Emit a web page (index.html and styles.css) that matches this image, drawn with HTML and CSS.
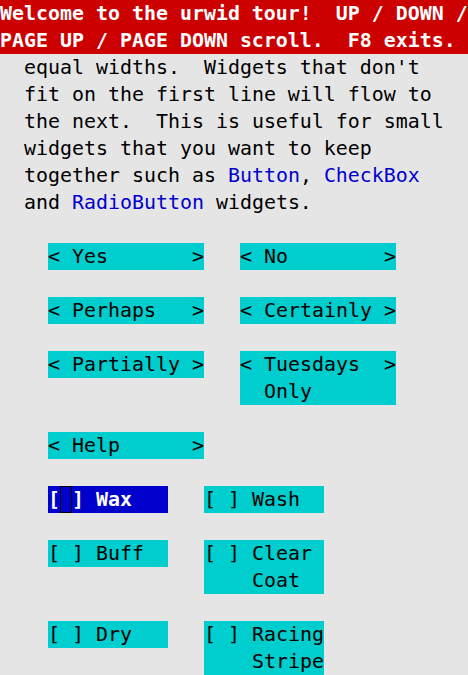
FILE: index.html
```html
<!DOCTYPE html>
<html>
<head>
<meta charset="utf-8">
<link rel="stylesheet" href="styles.css">
</head>
<body>
<div class="screen">
  <header class="header">Welcome to the urwid tour!  UP / DOWN /
PAGE UP / PAGE DOWN scroll.  F8 exits.</header>
  <main class="body">
    <p class="text">equal widths.  Widgets that don't
fit on the first line will flow to
the next.  This is useful for small
widgets that you want to keep
together such as <span class="hl">Button</span>, <span class="hl">CheckBox</span>
and <span class="hl">RadioButton</span> widgets.</p>
    <div class="flow">
      <div class="btn">&lt; Yes       &gt;</div>
      <div class="btn">&lt; No        &gt;</div>
    </div>
    <div class="flow">
      <div class="btn">&lt; Perhaps   &gt;</div>
      <div class="btn">&lt; Certainly &gt;</div>
    </div>
    <div class="flow">
      <div class="btn">&lt; Partially &gt;</div>
      <div class="btn">&lt; Tuesdays  &gt;
  Only</div>
    </div>
    <div class="flow">
      <div class="btn">&lt; Help      &gt;</div>
    </div>
    <div class="flow">
      <div class="chk focus">[<span class="cursor"> </span>] Wax</div>
      <div class="chk">[ ] Wash</div>
    </div>
    <div class="flow">
      <div class="chk">[ ] Buff</div>
      <div class="chk">[ ] Clear
    Coat</div>
    </div>
    <div class="flow">
      <div class="chk">[ ] Dry</div>
      <div class="chk">[ ] Racing
    Stripe</div>
    </div>
  </main>
</div>
</body>
</html>
```
FILE: styles.css
```css
html, body {
  margin: 0;
  padding: 0;
  background: #e5e5e5;
}
body {
  width: 468px;
  height: 675px;
  overflow: hidden;
}
.screen {
  font-family: "DejaVu Sans Mono", monospace;
  font-size: 19.93px;
  line-height: 27px;
  color: #000;
}
.header {
  display: block;
  background: #cd0000;
  color: #fff;
  font-weight: bold;
  height: 54px;
  overflow: hidden;
  white-space: pre;
}
.body {
  display: flex;
  flex-direction: column;
  gap: 27px;
}
.text {
  margin: 0;
  padding-left: 24px;
  white-space: pre;
}
.hl {
  color: #0000cd;
}
.flow {
  display: flex;
  align-items: flex-start;
  padding-left: 48px;
  gap: 36px;
}
.btn {
  width: 156px;
  background: #00cdcd;
  white-space: pre;
}
.chk {
  width: 120px;
  background: #00cdcd;
  white-space: pre;
}
.chk.focus {
  background: #0000cd;
  color: #fff;
  font-weight: bold;
}
.cursor {
  display: inline-block;
  width: 12px;
  height: 27px;
  vertical-align: top;
  box-shadow: inset 0 0 0 1px #000;
}
```
